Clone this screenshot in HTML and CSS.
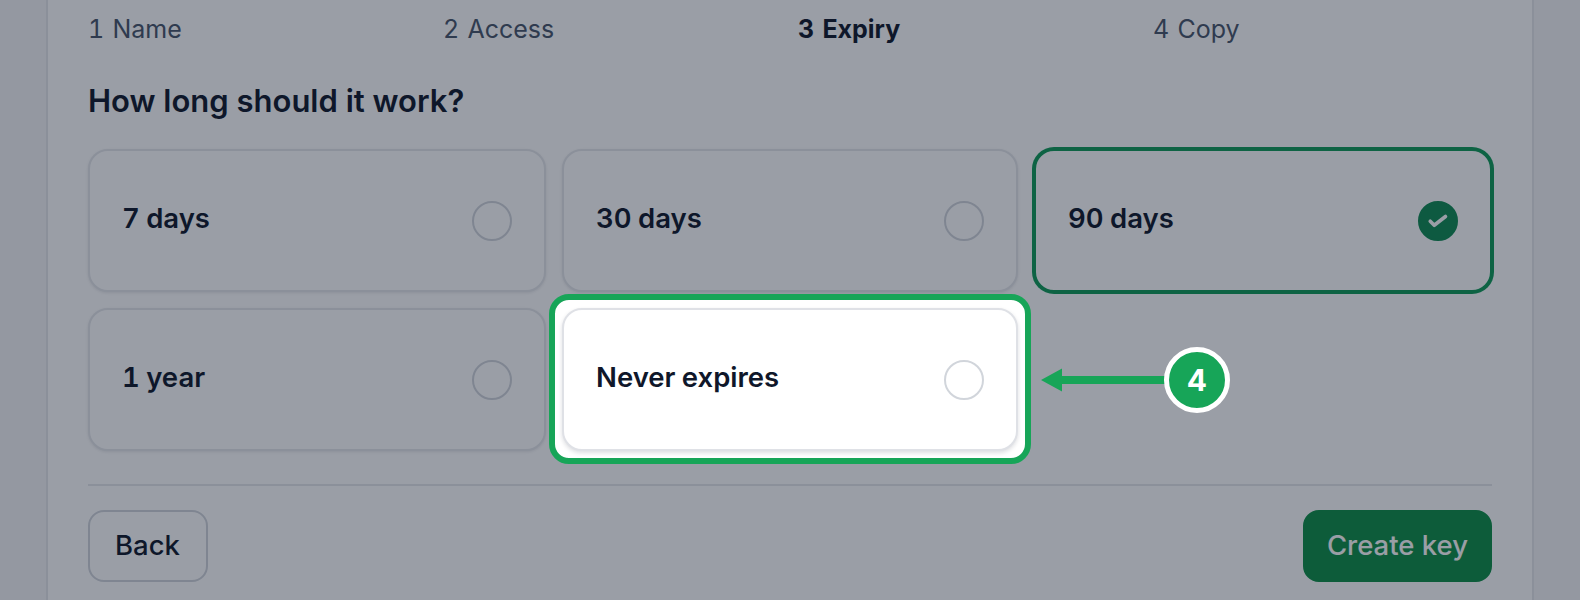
FILE: index.html
```html
<!DOCTYPE html>
<html lang="en">
<head>
<meta charset="utf-8">
<title>Create key – Expiry</title>
<link rel="stylesheet" href="styles.css">
</head>
<body>
<main class="page">
  <section class="panel">
    <ol class="steps">
      <li>1 Name</li>
      <li>2 Access</li>
      <li class="current">3 Expiry</li>
      <li>4 Copy</li>
    </ol>
    <h2 class="question">How long should it work?</h2>
    <div class="options">
      <div class="option"><span>7 days</span><i class="radio"></i></div>
      <div class="option"><span>30 days</span><i class="radio"></i></div>
      <div class="option selected"><span>90 days</span>
        <i class="radio checked">
          <svg viewBox="0 0 24 24" width="30" height="30" fill="none" stroke="currentColor" stroke-width="2.9" stroke-linecap="round" stroke-linejoin="round"><path d="M5.8 12.2l3.2 3.2 9-7"/></svg>
        </i>
      </div>
      <div class="option"><span>1 year</span><i class="radio"></i></div>
      <div class="spotlight">
        <div class="option"><span>Never expires</span><i class="radio"></i></div>
        <div class="callout">
          <svg class="arrow" viewBox="0 0 129 26" width="129" height="26"><path d="M0 13L21 1.5V9H129V17H21V24.5Z"/></svg>
          <b class="badge">4</b>
        </div>
      </div>
    </div>
    <footer class="actions">
      <button class="btn">Back</button>
      <button class="btn primary">Create key</button>
    </footer>
  </section>
</main>
<div class="scrim"></div>
</body>
</html>
```
FILE: styles.css
```css
* { box-sizing: border-box; }
html, body { margin: 0; height: 600px; overflow: hidden; }
body { background: #f4f5f7; font-family: Inter, "Liberation Sans", sans-serif; color: #0f172a; }
.page { padding: 0 46px; }
.panel {
  background: #fff;
  border: solid #e5e7eb;
  border-width: 0 2px;
  padding: 12px 40px 0;
  height: 600px;
}
.steps {
  list-style: none; margin: 0; padding: 0;
  display: grid; grid-template-columns: repeat(4, 1fr); column-gap: 16px;
  font-size: 25px; line-height: 34px; color: #475569;
  font-variant-numeric: tabular-nums; word-spacing: 1.5px;
}
.steps .current { font-weight: 700; color: #0f172a; }
.question { margin: 35px 0 28px; font-size: 31px; line-height: 40px; font-weight: 600; color: #0f172a; }
.options { display: grid; grid-template-columns: 1fr 456px 1fr; grid-auto-rows: 143px; gap: 16px; }
.option {
  display: flex; align-items: center; justify-content: space-between;
  padding: 0 32px; border: 2px solid #e5e7eb; border-radius: 20px;
  background: #fff; font-size: 27.5px; font-weight: 600; box-shadow: 0 1px 3px rgba(15,23,42,.1);
  font-variant-numeric: tabular-nums; word-spacing: -1px;
}
.option span { margin-bottom: 5px; }
.option.selected { border-color: #0e9a57; box-shadow: 0 0 0 2px #0e9a57; }
.radio { width: 40px; height: 40px; border: 2px solid #d1d5db; border-radius: 50%; display: flex; align-items: center; justify-content: center; }
.radio.checked { background: #0f8a52; border-color: #0f8a52; color: #fff; }
.spotlight { position: relative; z-index: 20; display: grid; }
.spotlight .option { box-shadow: 0 2px 4px rgba(15,23,42,.14); border-color: #dfe1e6; }
.spotlight::before {
  content: ""; position: absolute; z-index: -1;
  inset: -14px -13px -13px;
  background: #fff; border: 6px solid #17a558; border-radius: 20px;
}
.callout { position: absolute; left: calc(100% + 23px); top: 50%; transform: translateY(-50%); display: flex; align-items: center; }
.arrow { display: block; fill: #17a558; margin-right: -6px; }
.badge {
  width: 66px; height: 66px; border: 5px solid #fff; border-radius: 50%;
  background: #17a558; color: #fff; font-size: 30px; font-weight: 700;
  display: flex; align-items: center; justify-content: center; position: relative;
}
.actions { margin-top: 33px; padding-top: 24px; border-top: 2px solid #e5e7eb; display: flex; justify-content: space-between; }
.btn { height: 72px; padding: 0 26px 3px 25px; border: 2px solid #d1d5db; border-radius: 16px; background: #fff; font: 500 27.5px Inter, "Liberation Sans", sans-serif; color: #0f172a; }
.btn.primary { padding: 0 22px 3px; background: #0d8e46; border-color: #0d8e46; color: #fff; }
.scrim { position: fixed; inset: 0; z-index: 10; background: rgba(15, 23, 42, .42); }
```
